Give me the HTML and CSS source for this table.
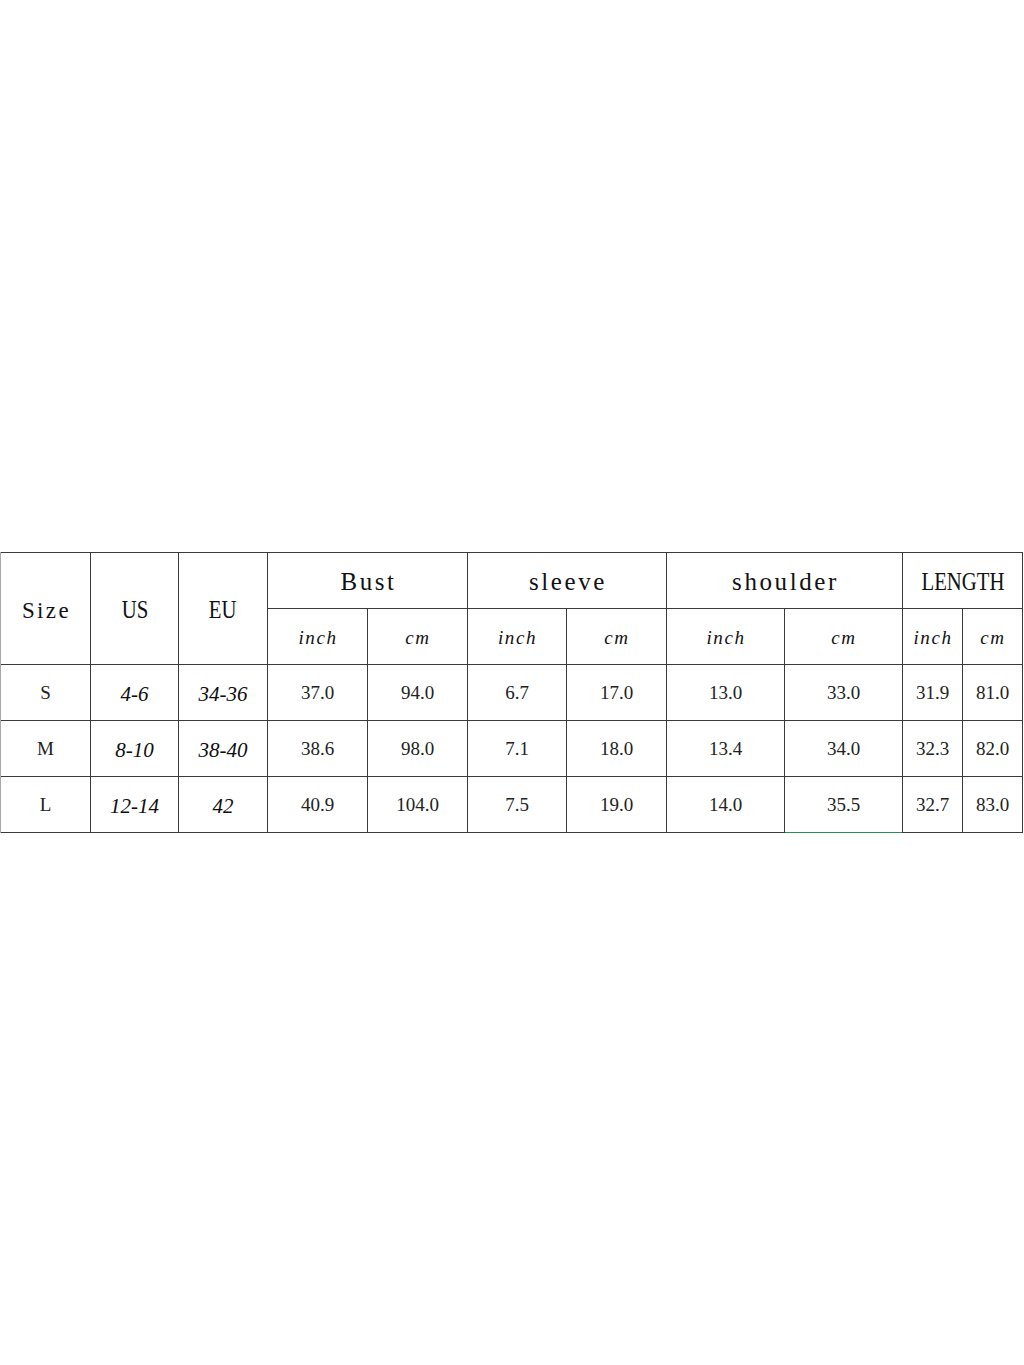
FILE: index.html
```html
<!DOCTYPE html>
<html lang="en">
<head>
<meta charset="utf-8">
<title>Size chart</title>
<link rel="stylesheet" href="styles.css">
</head>
<body>
<div class="page">
  <div class="chart">
    <div class="cell head tall mono size">Size</div>
    <div class="cell head tall"><span class="narrow">US</span></div>
    <div class="cell head tall"><span class="narrow">EU</span></div>
    <div class="cell head wide mono">Bust</div>
    <div class="cell head wide mono">sleeve</div>
    <div class="cell head wide mono">shoulder</div>
    <div class="cell head wide"><span class="narrow">LENGTH</span></div>

    <div class="cell unit">inch</div>
    <div class="cell unit">cm</div>
    <div class="cell unit">inch</div>
    <div class="cell unit">cm</div>
    <div class="cell unit">inch</div>
    <div class="cell unit">cm</div>
    <div class="cell unit">inch</div>
    <div class="cell unit">cm</div>

    <div class="cell num">S</div>
    <div class="cell ital">4-6</div>
    <div class="cell ital">34-36</div>
    <div class="cell num">37.0</div>
    <div class="cell num">94.0</div>
    <div class="cell num">6.7</div>
    <div class="cell num">17.0</div>
    <div class="cell num">13.0</div>
    <div class="cell num">33.0</div>
    <div class="cell num">31.9</div>
    <div class="cell num">81.0</div>

    <div class="cell num">M</div>
    <div class="cell ital">8-10</div>
    <div class="cell ital">38-40</div>
    <div class="cell num">38.6</div>
    <div class="cell num">98.0</div>
    <div class="cell num">7.1</div>
    <div class="cell num">18.0</div>
    <div class="cell num">13.4</div>
    <div class="cell num">34.0</div>
    <div class="cell num">32.3</div>
    <div class="cell num">82.0</div>

    <div class="cell num">L</div>
    <div class="cell ital">12-14</div>
    <div class="cell ital">42</div>
    <div class="cell num">40.9</div>
    <div class="cell num">104.0</div>
    <div class="cell num">7.5</div>
    <div class="cell num">19.0</div>
    <div class="cell num">14.0</div>
    <div class="cell num green">35.5</div>
    <div class="cell num">32.7</div>
    <div class="cell num">83.0</div>
  </div>
</div>
</body>
</html>
```

FILE: styles.css
```css
html, body {
  margin: 0;
  padding: 0;
  background: #ffffff;
}

.page {
  width: 1024px;
  height: 1365px;
  padding-top: 552px;
  box-sizing: border-box;
}

.chart {
  display: grid;
  grid-template-columns: 89px 87px 88px 99px 99px 98px 99px 117px 117px 59px 59px;
  grid-template-rows: repeat(5, 55px);
  gap: 1px;
  padding: 1px 1px 1px 0;
  border-left: 1px solid #a8a8a8;
  background: #3a3a3a;
  width: max-content;
}

.cell {
  background: #ffffff;
  display: flex;
  align-items: center;
  justify-content: center;
  color: #1a1a1a;
  font-family: "Liberation Serif", "Times New Roman", serif;
}

.tall {
  grid-row: span 2;
}

.wide {
  grid-column: span 2;
}

.head {
  font-size: 25px;
  color: #111111;
}

.mono {
  font-family: "Liberation Serif", "Times New Roman", serif;
  font-size: 25px;
  letter-spacing: 2.6px;
  padding-top: 3px;
  padding-left: 2px;
}

.mono.size {
  font-size: 23px;
  letter-spacing: 2.4px;
  padding-top: 4px;
}

.narrow {
  display: inline-block;
  transform: scaleX(0.83);
  padding-top: 2px;
}

.unit {
  font-family: "Liberation Serif", "Times New Roman", serif;
  font-style: italic;
  font-size: 19px;
  letter-spacing: 1.6px;
  color: #111111;
  padding-top: 2px;
  padding-left: 1px;
}

.num {
  font-size: 19px;
  color: #222222;
}

.ital {
  font-style: italic;
  font-size: 21px;
  color: #0d0d0d;
  padding-top: 3px;
}

.green {
  box-shadow: 0 1px 0 #2f8a5e;
}
```
